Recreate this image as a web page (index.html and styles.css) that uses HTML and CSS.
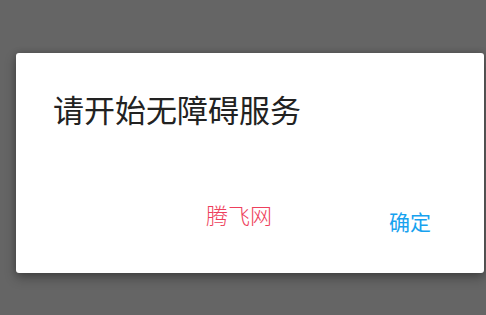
FILE: index.html
```html
<!DOCTYPE html>
<html lang="zh">
<head>
<meta charset="utf-8">
<link rel="stylesheet" href="styles.css">
</head>
<body>
<div class="dialog">
  <div class="title">请开始无障碍服务</div>
  <div class="footer">
    <span class="mark">腾飞网</span>
    <span class="ok">确定</span>
  </div>
</div>
</body>
</html>
```
FILE: styles.css
```css
html, body {
  margin: 0;
  padding: 0;
}
body {
  background: #656565;
  width: 486px;
  height: 315px;
  overflow: hidden;
  font-family: "Noto Sans CJK SC", "Noto Sans", sans-serif;
}
.dialog {
  margin: 53px 0 0 16px;
  width: 468px;
  height: 220px;
  box-sizing: border-box;
  background: #ffffff;
  border-radius: 3px;
  box-shadow: 0 5px 12px rgba(0, 0, 0, 0.3), 0 0 6px rgba(0, 0, 0, 0.2);
  display: flex;
  flex-direction: column;
}
.title {
  padding: 36px 0 0 37px;
  font-size: 31px;
  line-height: 40px;
  color: #222222;
}
.footer {
  margin-top: 71px;
  display: flex;
  justify-content: flex-end;
  align-items: flex-start;
  gap: 117px;
  padding-right: 53px;
}
.mark {
  font-size: 22px;
  line-height: 28px;
  font-weight: 300;
  color: #ee3f5c;
}
.ok {
  margin-top: 7px;
  font-size: 21px;
  line-height: 28px;
  color: #17a2ef;
}
```
